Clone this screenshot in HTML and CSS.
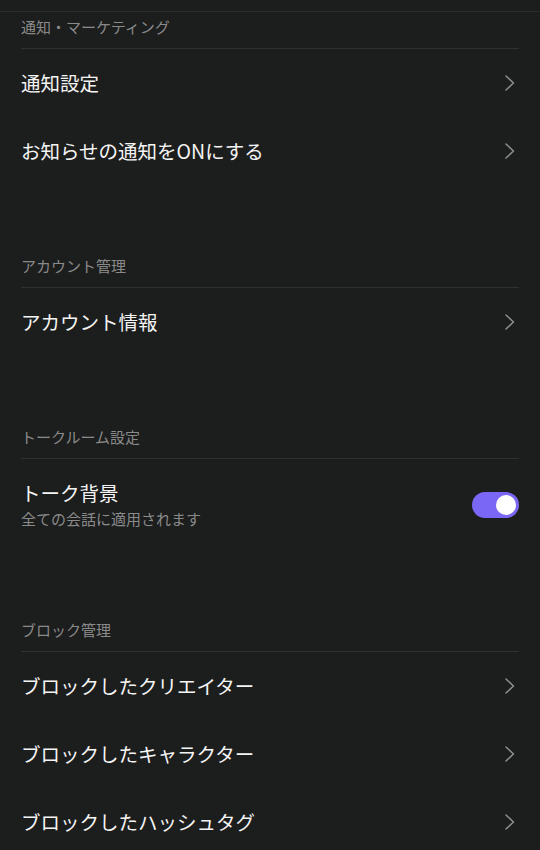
FILE: index.html
```html
<!DOCTYPE html>
<html lang="ja">
<head>
<meta charset="utf-8">
<title>設定</title>
<link rel="stylesheet" href="styles.css">
</head>
<body>
<div class="topbar"></div>
<main class="settings">
  <section class="group">
    <h2 class="group-title">通知・マーケティング</h2>
    <a class="row" href="#"><span class="row-label">通知設定</span><svg class="chev" viewBox="0 0 20 20"><path d="M7 3 L14.5 10 L7 17"/></svg></a>
    <a class="row" href="#"><span class="row-label">お知らせの通知をONにする</span><svg class="chev" viewBox="0 0 20 20"><path d="M7 3 L14.5 10 L7 17"/></svg></a>
  </section>
  <section class="group">
    <h2 class="group-title">アカウント管理</h2>
    <a class="row" href="#"><span class="row-label">アカウント情報</span><svg class="chev" viewBox="0 0 20 20"><path d="M7 3 L14.5 10 L7 17"/></svg></a>
  </section>
  <section class="group">
    <h2 class="group-title">トークルーム設定</h2>
    <div class="row row-tall">
      <div class="row-text">
        <span class="row-label">トーク背景</span>
        <span class="row-sub">全ての会話に適用されます</span>
      </div>
      <span class="toggle on"><span class="knob"></span></span>
    </div>
  </section>
  <section class="group">
    <h2 class="group-title">ブロック管理</h2>
    <a class="row" href="#"><span class="row-label">ブロックしたクリエイター</span><svg class="chev" viewBox="0 0 20 20"><path d="M7 3 L14.5 10 L7 17"/></svg></a>
    <a class="row" href="#"><span class="row-label">ブロックしたキャラクター</span><svg class="chev" viewBox="0 0 20 20"><path d="M7 3 L14.5 10 L7 17"/></svg></a>
    <a class="row" href="#"><span class="row-label">ブロックしたハッシュタグ</span><svg class="chev" viewBox="0 0 20 20"><path d="M7 3 L14.5 10 L7 17"/></svg></a>
  </section>
</main>
</body>
</html>
```
FILE: styles.css
```css
html, body {
  margin: 0;
  padding: 0;
  background: #1c1d1d;
}
body {
  font-family: "Noto Sans CJK JP", "Noto Sans", sans-serif;
  color: #f2f2f2;
  overflow: hidden;
}
.topbar {
  height: 11px;
  border-bottom: 1px solid #2a2b2b;
}
.settings {
  padding: 0 21px;
}
.group {
  margin-top: 66px;
}
.group:first-child {
  margin-top: 0;
}
.group-title {
  margin: 0;
  padding: 5px 0 11px;
  font-size: 15px;
  line-height: 20px;
  font-weight: 400;
  color: #8a8a8a;
  border-bottom: 1px solid #2f3030;
}
.row {
  display: flex;
  align-items: center;
  justify-content: space-between;
  height: 68px;
  text-decoration: none;
  color: inherit;
}
.row-tall {
  height: auto;
  padding: 22px 0 20px;
}
.row-text {
  display: flex;
  flex-direction: column;
  gap: 4px;
}
.row-label {
  font-size: 19.5px;
  line-height: 24px;
  font-weight: 400;
  color: #f4f4f4;
}
.row-sub {
  font-size: 15px;
  line-height: 20px;
  color: #8a8a8a;
}
.chev {
  width: 20px;
  height: 20px;
  flex: none;
}
.chev path {
  fill: none;
  stroke: #8c8c8c;
  stroke-width: 1.6;
  stroke-linecap: round;
  stroke-linejoin: round;
}
.toggle {
  width: 47px;
  height: 26px;
  border-radius: 13px;
  background: #7a67f6;
  display: flex;
  align-items: center;
  justify-content: flex-end;
  padding: 0 3px;
  box-sizing: border-box;
  flex: none;
}
.knob {
  width: 20px;
  height: 20px;
  border-radius: 50%;
  background: #ffffff;
}
```
